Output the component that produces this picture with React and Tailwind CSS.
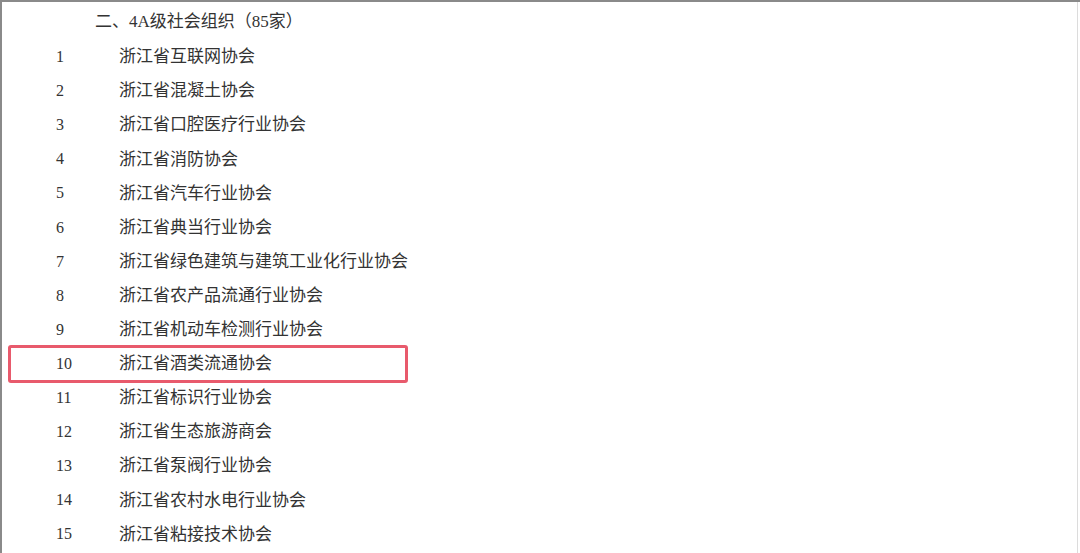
import React from "react";

const orgs = [
  "浙江省互联网协会",
  "浙江省混凝土协会",
  "浙江省口腔医疗行业协会",
  "浙江省消防协会",
  "浙江省汽车行业协会",
  "浙江省典当行业协会",
  "浙江省绿色建筑与建筑工业化行业协会",
  "浙江省农产品流通行业协会",
  "浙江省机动车检测行业协会",
  "浙江省酒类流通协会",
  "浙江省标识行业协会",
  "浙江省生态旅游商会",
  "浙江省泵阀行业协会",
  "浙江省农村水电行业协会",
  "浙江省粘接技术协会",
];

const App = () => {
  return (
    <div
      className="w-[1080px] h-[553px] overflow-hidden bg-white border-t-2 border-l-2 border-[#8a8a8a] text-[#333] text-[17px]"
      style={{ fontFamily: '"Liberation Serif", "Noto Sans CJK SC", serif' }}
    >
      <div className="h-full border-r border-[#dcdcdc] mr-[2px] pt-[2px]">
        <div className="h-[36px] flex items-center pl-[93px]">
          二、4A级社会组织（85家）
        </div>
        {orgs.map((name, i) => (
          <div key={i} className="relative h-[34.1px] flex items-center">
            <span className="w-[117px] pl-[54px] text-[16px]">{i + 1}</span>
            <span>{name}</span>
            {i === 9 && (
              <div className="absolute left-[6px] top-[-2px] w-[400px] h-[38px] border-[3px] border-[#e85a6c] rounded-[3px]" />
            )}
          </div>
        ))}
      </div>
    </div>
  );
};

export default App;
